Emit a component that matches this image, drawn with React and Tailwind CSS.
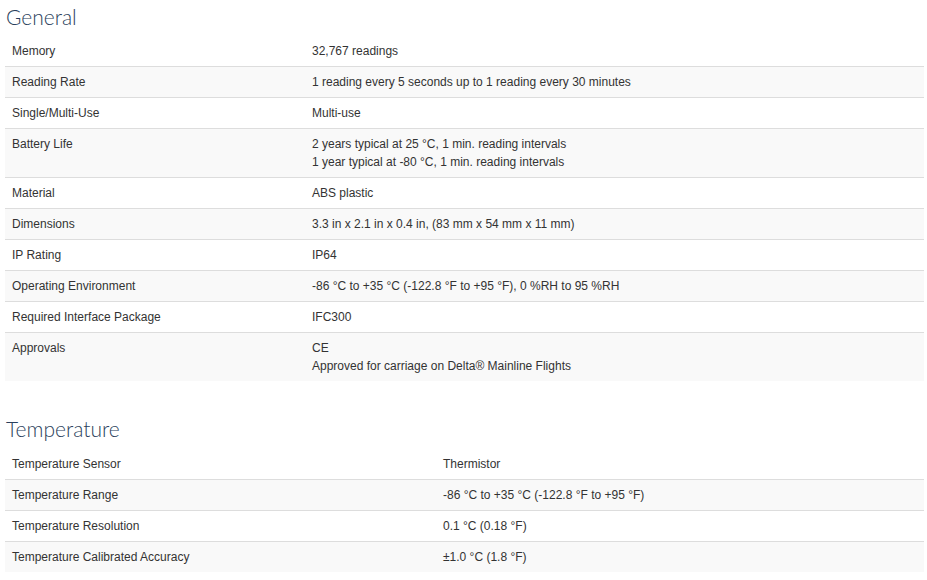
import React from 'react';

const general = [
  ['Memory', ['32,767 readings']],
  ['Reading Rate', ['1 reading every 5 seconds up to 1 reading every 30 minutes']],
  ['Single/Multi-Use', ['Multi-use']],
  ['Battery Life', ['2 years typical at 25 °C, 1 min. reading intervals', '1 year typical at -80 °C, 1 min. reading intervals']],
  ['Material', ['ABS plastic']],
  ['Dimensions', ['3.3 in x 2.1 in x 0.4 in, (83 mm x 54 mm x 11 mm)']],
  ['IP Rating', ['IP64']],
  ['Operating Environment', ['-86 °C to +35 °C (-122.8 °F to +95 °F), 0 %RH to 95 %RH']],
  ['Required Interface Package', ['IFC300']],
  ['Approvals', ['CE', 'Approved for carriage on Delta® Mainline Flights']],
];

const temperature = [
  ['Temperature Sensor', ['Thermistor']],
  ['Temperature Range', ['-86 °C to +35 °C (-122.8 °F to +95 °F)']],
  ['Temperature Resolution', ['0.1 °C (0.18 °F)']],
  ['Temperature Calibrated Accuracy', ['±1.0 °C (1.8 °F)']],
];

const SpecTable = ({ rows, labelWidth }) => (
  <table className="w-full border-collapse text-[12px] leading-[18px] text-[#333]">
    <colgroup>
      <col className={labelWidth} />
      <col />
    </colgroup>
    <tbody>
      {rows.map(([label, values], index) => (
        <tr
          key={label}
          className={`${index > 0 ? 'border-t border-[#dddddd]' : ''} ${index % 2 === 1 ? 'bg-[#f9f9f9]' : 'bg-white'}`}
        >
          <td className="align-top py-[6px] px-[7px]">{label}</td>
          <td className="align-top py-[6px] px-[7px]">
            {values.map((v) => (
              <div key={v}>{v}</div>
            ))}
          </td>
        </tr>
      ))}
    </tbody>
  </table>
);

const App = () => {
  return (
    <div className="bg-white w-[927px] min-h-[580px] pl-[5px] pr-[3px] pt-[5px]" style={{ fontFamily: '"Liberation Sans", Arial, sans-serif' }}>
      {/* General */}
      <h2 className="text-[21px] leading-[23px] font-light text-[#2b3f5c] pl-[1px] mb-[8px]" style={{ fontFamily: 'Lato, "Open Sans", sans-serif' }}>
        General
      </h2>
      <SpecTable rows={general} labelWidth="w-[300px]" />

      {/* Temperature */}
      <h2 className="text-[21px] leading-[23px] font-light text-[#2b3f5c] pl-[1px] mt-[36px] mb-[9px]" style={{ fontFamily: 'Lato, "Open Sans", sans-serif' }}>
        Temperature
      </h2>
      <SpecTable rows={temperature} labelWidth="w-[431px]" />
    </div>
  );
};

export default App;
